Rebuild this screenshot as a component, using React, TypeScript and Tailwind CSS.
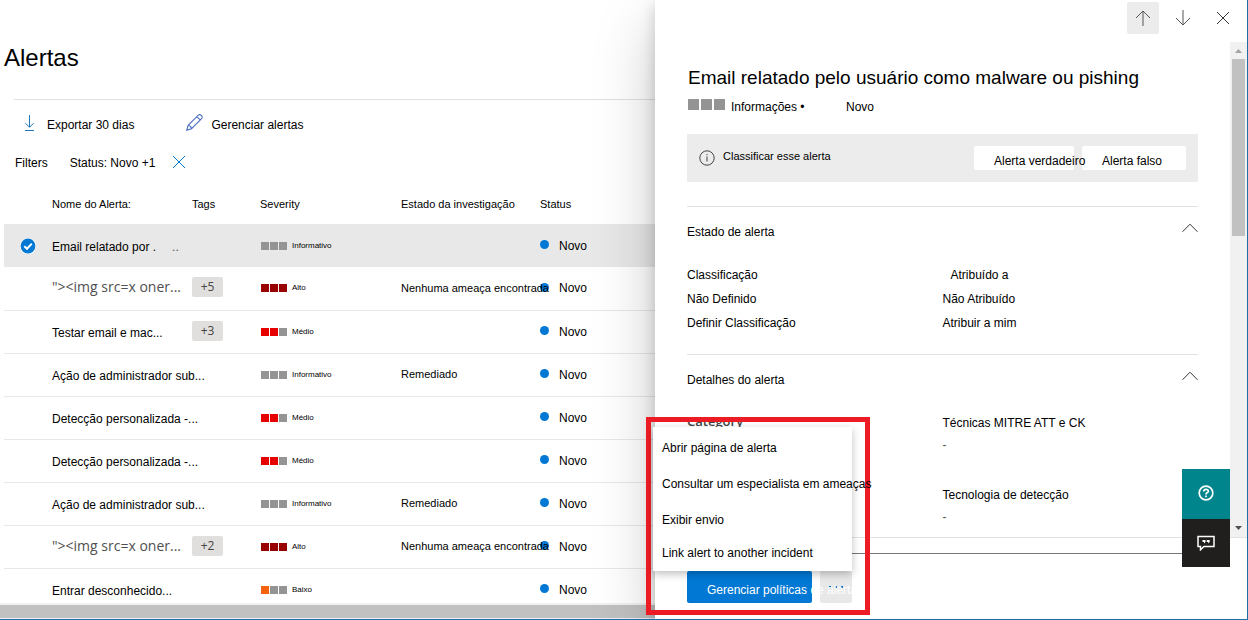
import React from "react";

type Level = "info" | "high" | "medium" | "low";

type Alert = {
  name: string;
  level: Level;
  tag?: string;
  state?: string;
  raw?: boolean;
  selected?: boolean;
};

const levels: Record<Level, { label: string; squares: string[] }> = {
  info: { label: "Informativo", squares: ["bg-[#949494]", "bg-[#949494]", "bg-[#949494]"] },
  high: { label: "Alto", squares: ["bg-[#990000]", "bg-[#990000]", "bg-[#990000]"] },
  medium: { label: "Médio", squares: ["bg-[#e60000]", "bg-[#e60000]", "bg-[#949494]"] },
  low: { label: "Baixo", squares: ["bg-[#f7630c]", "bg-[#949494]", "bg-[#949494]"] },
};

const alerts: Alert[] = [
  { name: "Email relatado por .", level: "info", selected: true },
  { name: "\"><img src=x oner...", level: "high", tag: "+5", state: "Nenhuma ameaça encontrada", raw: true },
  { name: "Testar email e mac...", level: "medium", tag: "+3" },
  { name: "Ação de administrador sub...", level: "info", state: "Remediado" },
  { name: "Detecção personalizada -...", level: "medium" },
  { name: "Detecção personalizada -...", level: "medium" },
  { name: "Ação de administrador sub...", level: "info", state: "Remediado" },
  { name: "\"><img src=x oner...", level: "high", tag: "+2", state: "Nenhuma ameaça encontrada", raw: true },
  { name: "Entrar desconhecido...", level: "low" },
];

function Stroke({ d, className, width = 1 }: { d: string; className: string; width?: number }) {
  return (
    <svg viewBox="0 0 16 16" className={className} fill="none" stroke="currentColor" strokeWidth={width} aria-hidden="true">
      <path d={d} />
    </svg>
  );
}

const closePath = "M2 2L14 14M14 2L2 14";
const chevronUp = "M0.5 11.8L8 4.2L15.5 11.8";

function AlertRow({ alert, index }: { alert: Alert; index: number }) {
  const level = levels[alert.level];
  return (
    <tr className={alert.selected ? "h-[43px] bg-[#e8e8e8]" : "h-[43px] border-b border-[#e8e8e8]"}>
      <td className="p-0">
        <label className="ml-4 flex size-4 items-center">
          <input
            type="checkbox"
            defaultChecked={alert.selected}
            aria-label={`Selecionar alerta ${index + 1}`}
            className="peer sr-only"
          />
          <svg viewBox="0 0 16 16" className="size-4 shrink-0 opacity-0 peer-checked:opacity-100" aria-hidden="true">
            <circle cx="8" cy="8" r="8" fill="#fff" />
            <circle cx="8" cy="8" r="7.4" fill="#0078d4" />
            <path d="M4.3 8.2L7 10.8L11.8 5.6" fill="none" stroke="#fff" strokeWidth="2" />
          </svg>
        </label>
      </td>
      <td className="p-0 text-xs">
        {alert.raw ? (
          <span className="block pb-[2px] font-['Open_Sans',sans-serif] text-sm font-medium text-[#505050]">{alert.name}</span>
        ) : (
          <span className="block pt-[2px]">
            {alert.name}
            {alert.selected && <span className="ml-4 text-[#555]">..</span>}
          </span>
        )}
      </td>
      <td className="p-0">
        {alert.tag && (
          <span className="mb-[2px] flex h-5 w-[31px] items-center justify-center rounded-xs bg-[#e1dfdd] font-['Open_Sans',sans-serif] text-xs text-[#444]">
            {alert.tag}
          </span>
        )}
      </td>
      <td className="p-0 pl-px">
        <div className="flex items-center gap-[5px]">
          <span className="flex gap-px">
            {level.squares.map((color, i) => (
              <span key={i} className={`size-2 ${color}`} />
            ))}
          </span>
          <span className="text-[8px] leading-3">{level.label}</span>
        </div>
      </td>
      <td className="relative z-10 p-0 text-[11px]">{alert.state}</td>
      <td className="p-0">
        <div className="flex items-center gap-[10px] text-xs">
          <span className="mb-[2px] size-[9px] rounded-full bg-[#0078d4]" />
          Novo
        </div>
      </td>
    </tr>
  );
}

function AlertsList() {
  return (
    <main className="flex min-w-0 flex-1 flex-col overflow-hidden">
      <h1 className="mt-[42px] pl-1 text-2xl leading-8">Alertas</h1>
      <div className="mt-[25px] ml-[14px] flex h-[51px] items-center border-t border-[#e1e1e1] text-xs">
        <button type="button" className="ml-2 flex items-center gap-[9px] whitespace-nowrap">
          <Stroke d="M7.5 0V12M3.5 8.3L7.5 12.3L11.5 8.3M3 15.5H12" className="mb-1 size-4 text-[#1f78b8]" />
          Exportar 30 dias
        </button>
        <button type="button" className="ml-[52px] flex items-center gap-2 whitespace-nowrap">
          <Stroke
            d="M0.7 15.3L2 10.6L11.6 1Q13 0 14.4 1.4Q15.9 3 14.7 4.3L5.2 13.8L0.7 15.3ZM2 10.6Q4.6 11 5.2 13.8M10.2 2.4L13.4 5.6"
            className="mb-[6px] size-[17px] text-[#4a6fc0]"
          />
          Gerenciar alertas
        </button>
      </div>
      <div className="flex h-6 items-center pl-[15px] text-xs">
        <span className="pt-px">Filters</span>
        <span className="ml-[22px] pt-px">Status: Novo +1</span>
        <button type="button" aria-label="Limpar filtros" className="ml-4">
          <Stroke d={closePath} className="size-4 text-[#0078d4]" />
        </button>
      </div>
      <table className="mt-[10px] ml-1 w-[calc(100%-4px)] table-fixed border-collapse text-left whitespace-nowrap">
        <colgroup>
          <col className="w-[48px]" />
          <col className="w-[140px]" />
          <col className="w-[68px]" />
          <col className="w-[141px]" />
          <col className="w-[139px]" />
          <col />
        </colgroup>
        <thead>
          <tr className="h-10 text-[11px]">
            <td className="p-0" />
            <th className="p-0 font-normal">Nome do Alerta:</th>
            <th className="p-0 font-normal">Tags</th>
            <th className="p-0 font-normal">Severity</th>
            <th className="p-0 font-normal">Estado da investigação</th>
            <th className="p-0 font-normal">Status</th>
          </tr>
        </thead>
        <tbody>
          {alerts.map((alert, i) => (
            <AlertRow key={i} alert={alert} index={i} />
          ))}
        </tbody>
      </table>
    </main>
  );
}

function SectionHeader({ title }: { title: string }) {
  return (
    <div className="flex items-start justify-between pt-[17px]">
      <h3 className="text-xs leading-4">{title}</h3>
      <button type="button" aria-label={`Recolher ${title}`} className="-mt-1">
        <Stroke d={chevronUp} className="size-4 text-[#333]" />
      </button>
    </div>
  );
}

function DetailsPanel() {
  const rule = "border-t border-[#e3e3e3]";
  return (
    <aside className="relative flex w-[592px] shrink-0 flex-col bg-white shadow-[0_26px_58px_rgba(0,0,0,0.22),0_5px_14px_rgba(0,0,0,0.18)]">
      <div className="flex h-[42px] items-start justify-end gap-2 pt-[2px] pr-2 text-[#555]">
        <button type="button" aria-label="Alerta anterior" className="flex size-8 items-center justify-center rounded-xs bg-[#ececec]">
          <Stroke d="M8 1V16M1 8L8 1L15 8" className="size-4" />
        </button>
        <button type="button" aria-label="Próximo alerta" className="flex size-8 items-center justify-center">
          <Stroke d="M8 0V15M1 8L8 15L15 8" className="size-4" />
        </button>
        <button type="button" aria-label="Fechar" className="flex size-8 items-center justify-center text-[#333]">
          <Stroke d={closePath} className="size-4" />
        </button>
      </div>

      <div className="flex min-h-0 flex-1 border-b border-[#e3e3e3]">
        <div className="min-w-0 flex-1 overflow-hidden pr-8 pl-8">
          <h2 className="pt-[22px] pl-px text-[19px] leading-7 whitespace-nowrap">
            Email relatado pelo usuário como malware ou pishing
          </h2>
          <div className="mt-[7px] flex h-4 items-center text-xs">
            <span className="mb-[6px] ml-px flex gap-[2px]">
              <span className="size-[11px] bg-[#949494]" />
              <span className="size-[11px] bg-[#949494]" />
              <span className="size-[11px] bg-[#949494]" />
            </span>
            <span className="ml-[6px] w-[115px]">Informações •</span>
            <span>Novo</span>
          </div>

          <div className="mt-[19px] flex h-12 items-center bg-[#ececec] px-3 text-xs">
            <svg viewBox="0 0 16 16" className="size-4 text-[#444]" fill="none" stroke="currentColor" aria-hidden="true">
              <circle cx="8" cy="8" r="7.2" />
              <path d="M8 6.5V11.5M8 4V5.2" />
            </svg>
            <span className="mb-1 ml-2 text-[11px]">Classificar esse alerta</span>
            <div className="ml-auto flex gap-2 whitespace-nowrap">
              <button type="button" className="relative z-10 h-6 w-[100px] rounded-xs bg-white pt-[5px] pl-5 text-left">
                Alerta verdadeiro
              </button>
              <button type="button" className="h-6 w-[104px] rounded-xs bg-white pt-[5px] pl-5 text-left">
                Alerta falso
              </button>
            </div>
          </div>

          <section className={`mt-6 pb-[19px] ${rule}`}>
            <SectionHeader title="Estado de alerta" />
            <div className="mt-[23px] grid grid-cols-2 text-xs leading-6">
              <span>Classificação</span>
              <span className="pl-2">Atribuído a</span>
              <span>Não Definido</span>
              <span>Não Atribuído</span>
              <a href="#classificar">Definir Classificação</a>
              <a href="#atribuir">Atribuir a mim</a>
            </div>
          </section>

          <section className={rule}>
            <SectionHeader title="Detalhes do alerta" />
            <div className="mt-[23px] grid grid-cols-2 text-xs leading-6">
              <span className="font-['Open_Sans',sans-serif] text-[13px] leading-5 font-semibold text-[#444]">Category</span>
              <div>
                <p>Técnicas MITRE ATT e CK</p>
                <p className="leading-5 text-[#555]">-</p>
                <p className="mt-7">Tecnologia de detecção</p>
                <p className="leading-5 text-[#555]">-</p>
              </div>
            </div>
          </section>
        </div>

        <div className="flex w-[17px] flex-col items-center bg-[#f1f1f1]" aria-hidden="true">
          <svg viewBox="0 0 17 17" className="size-[17px] shrink-0">
            <path d="M5 11L8.5 7L12 11Z" fill="#a3a3a3" />
          </svg>
          <div className="h-[177px] w-[13px] bg-[#c1c1c1]" />
          <svg viewBox="0 0 17 17" className="mt-auto size-[17px] shrink-0">
            <path d="M5 6L8.5 10L12 6Z" fill="#505050" />
          </svg>
        </div>
      </div>

      <div className="px-8 pt-[15px] pb-4">
        <div className="relative border-t border-[#777] pt-[17px]">
          <div className="flex gap-2 text-xs">
            <button
              type="button"
              className="relative z-10 h-8 w-[125px] rounded-xs bg-[#0078d4] pt-[5px] pl-5 text-left whitespace-nowrap text-white"
            >
              Gerenciar políticas de alerta
            </button>
            <button
              type="button"
              aria-label="Mais ações"
              className="flex size-8 items-center justify-center gap-1 rounded-xs bg-[#e8e8e8]"
            >
              <span className="size-[2px] bg-[#0078d4]" />
              <span className="size-[2px] bg-[#0078d4]" />
              <span className="size-[2px] bg-[#0078d4]" />
            </button>
          </div>

          <div
            role="menu"
            className="absolute bottom-8 -left-[34px] z-20 flex h-36 w-[199px] flex-col items-start bg-white pl-[9px] text-xs whitespace-nowrap shadow-[0_3px_8px_rgba(0,0,0,0.25)]"
          >
            <button type="button" role="menuitem" className="mt-[3px] h-9">Abrir página de alerta</button>
            <button type="button" role="menuitem" className="h-9">Consultar um especialista em ameaças</button>
            <button type="button" role="menuitem" className="h-9">Exibir envio</button>
            <button type="button" role="menuitem" className="h-[30px]">Link alert to another incident</button>
          </div>
          <div
            className="pointer-events-none absolute -bottom-3 -left-[41px] z-10 h-[198px] w-[224px] border-[5px] border-[#ed1c24]"
            aria-hidden="true"
          />
        </div>
      </div>

      <div className="absolute right-[17px] bottom-[52px] flex w-12 flex-col text-white">
        <button type="button" aria-label="Ajuda" className="flex h-[50px] items-center justify-center bg-[#00858d]">
          <svg viewBox="0 0 16 16" className="mb-[2px] size-4" fill="none" stroke="currentColor" strokeWidth="1.7" aria-hidden="true">
            <circle cx="8" cy="8" r="6.8" />
            <path d="M5.7 6.5Q5.8 4.4 8 4.4Q10.4 4.4 10.3 6.3Q10.2 7.3 9 7.8Q8 8.3 8 9.6M8 10.6V12.2" />
          </svg>
        </button>
        <button type="button" aria-label="Comentários" className="flex h-12 items-center justify-center bg-[#201f1e]">
          <svg viewBox="0 0 18 16" className="h-4 w-[18px]" fill="none" stroke="currentColor" strokeWidth="1.5" aria-hidden="true">
            <path d="M1 1.5H17V11.5H7L3.5 14.8V11.5H1Z" />
            <path d="M5.5 5H8.5V7L7 8.4V7H5.5ZM9.7 5H12.7V7L11.2 8.4V7H9.7Z" fill="currentColor" stroke="none" />
          </svg>
        </button>
      </div>
    </aside>
  );
}

export default function App() {
  return (
    <div className="relative flex h-screen overflow-hidden border-r border-b border-[#1f6ea8] bg-white font-['Liberation_Sans',Arial,sans-serif] text-black">
      <div
        className="absolute inset-x-0 bottom-0 h-4 border-t-2 border-b border-[#f1f1f1] bg-[#c1c1c1]"
        aria-hidden="true"
      />
      <AlertsList />
      <DetailsPanel />
    </div>
  );
}
